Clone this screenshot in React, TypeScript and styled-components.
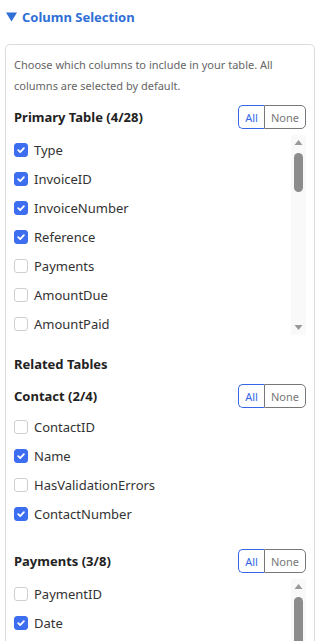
import React from 'react'
import styled, { createGlobalStyle } from 'styled-components'

const GlobalStyle = createGlobalStyle`
  html, body {
    margin: 0;
    padding: 0;
    background: #ffffff;
    font-family: "Noto Sans", "Open Sans", sans-serif;
  }
`

const Page = styled.div`
  padding: 6px 7px 0 5px;
  width: 322px;
  box-sizing: border-box;
  height: 641px;
  overflow: hidden;
`

const Title = styled.div`
  display: flex;
  align-items: center;
  gap: 5px;
  height: 22px;
  margin: 0 0 16px 1px;
  color: #2f6fd6;
  font-size: 13px;
  font-weight: 700;
`

const Panel = styled.div`
  border: 1px solid #dcdcdc;
  border-radius: 5px;
  padding: 9px 8px 20px 8px;
`

const Description = styled.p`
  margin: 0 0 9px 0;
  font-size: 11px;
  line-height: 21px;
  color: #666666;
`

const SectionHeader = styled.div<{ $top: number }>`
  display: flex;
  align-items: center;
  justify-content: space-between;
  margin-top: ${(p) => p.$top}px;
  height: 24px;
`

const HeaderTitle = styled.div`
  font-size: 13px;
  font-weight: 700;
  color: #222222;
`

const Heading = styled.div`
  font-size: 13px;
  font-weight: 700;
  color: #222222;
  margin-top: 19px;
  line-height: 20px;
`

const ButtonGroup = styled.div`
  display: flex;
  height: 24px;
`

const GroupButton = styled.button<{ $active?: boolean }>`
  font-family: inherit;
  font-size: 11px;
  background: #ffffff;
  padding: 0 6px;
  cursor: pointer;
  color: ${(p) => (p.$active ? '#3566e8' : '#777777')};
  border: 1px solid ${(p) => (p.$active ? '#3566e8' : '#777777')};
  border-radius: ${(p) => (p.$active ? '5px 0 0 5px' : '0 5px 5px 0')};
  ${(p) => (p.$active ? 'border-right: none;' : '')}
`

const ScrollBox = styled.div`
  display: flex;
  height: 200px;
  margin-top: 6px;
`

const List = styled.div<{ $scroll?: boolean }>`
  flex: 1;
  margin-top: ${(p) => (p.$scroll ? '0' : '4px')};
  overflow: hidden;
`

const Track = styled.div`
  width: 15px;
  flex-shrink: 0;
  display: flex;
  flex-direction: column;
  align-items: center;
  background: #f9f9f9;
`

const ArrowButton = styled.div`
  height: 15px;
  width: 15px;
  display: flex;
  align-items: center;
  justify-content: center;
`

const Thumb = styled.div<{ $size: number }>`
  width: 9px;
  height: ${(p) => p.$size}px;
  margin-top: 3px;
  border-radius: 5px;
  background: #8c8c8c;
`

const Spacer = styled.div`
  flex: 1;
`

const Item = styled.label`
  display: flex;
  align-items: center;
  gap: 6px;
  height: 29px;
  font-size: 13px;
  color: #333333;
`

const Box = styled.span<{ $checked: boolean }>`
  display: inline-flex;
  align-items: center;
  justify-content: center;
  width: 14px;
  height: 14px;
  box-sizing: border-box;
  border-radius: 3px;
  background: ${(p) => (p.$checked ? '#3d6ef0' : '#ffffff')};
  border: 1px solid ${(p) => (p.$checked ? '#3d6ef0' : '#cfcfcf')};
  flex-shrink: 0;
`

type Col = { name: string; on: boolean }

const primary: Col[] = [
  { name: 'Type', on: true },
  { name: 'InvoiceID', on: true },
  { name: 'InvoiceNumber', on: true },
  { name: 'Reference', on: true },
  { name: 'Payments', on: false },
  { name: 'AmountDue', on: false },
  { name: 'AmountPaid', on: false },
]

const contact: Col[] = [
  { name: 'ContactID', on: false },
  { name: 'Name', on: true },
  { name: 'HasValidationErrors', on: false },
  { name: 'ContactNumber', on: true },
]

const payments: Col[] = [
  { name: 'PaymentID', on: false },
  { name: 'Date', on: true },
]

const Caret = () => (
  <svg width="11" height="10" viewBox="0 0 11 10">
    <path d="M0 0.5 L11 0.5 L5.5 9.5 Z" fill="#2f6fd6" />
  </svg>
)

const Check = () => (
  <svg width="10" height="10" viewBox="0 0 10 10">
    <path d="M2.2 5.2 L4.2 7.1 L7.9 3.1" fill="none" stroke="#ffffff" strokeWidth="1.8" strokeLinecap="round" strokeLinejoin="round" />
  </svg>
)

const Arrow = (props: { up?: boolean }) => (
  <svg width="9" height="7" viewBox="0 0 9 7">
    <path d={props.up ? 'M0.5 6 L4.5 1 L8.5 6 Z' : 'M0.5 1 L8.5 1 L4.5 6 Z'} fill="#999999" />
  </svg>
)

const Scrollbar = (props: { thumb: number }) => (
  <Track>
    <ArrowButton>
      <Arrow up />
    </ArrowButton>
    <Thumb $size={props.thumb} />
    <Spacer />
    <ArrowButton>
      <Arrow />
    </ArrowButton>
  </Track>
)

const Columns = (props: { cols: Col[]; thumb?: number }) => {
  const list = (
    <List $scroll={!!props.thumb}>
      {props.cols.map((c, i) => (
        <Item key={i}>
          <Box $checked={c.on}>{c.on && <Check />}</Box>
          {c.name}
        </Item>
      ))}
    </List>
  )
  if (!props.thumb) return list
  return (
    <ScrollBox>
      {list}
      <Scrollbar thumb={props.thumb} />
    </ScrollBox>
  )
}

const Section = (props: { title: string; top: number; cols: Col[]; thumb?: number }) => (
  <>
    <SectionHeader $top={props.top}>
      <HeaderTitle>{props.title}</HeaderTitle>
      <ButtonGroup>
        <GroupButton $active>All</GroupButton>
        <GroupButton>None</GroupButton>
      </ButtonGroup>
    </SectionHeader>
    <Columns cols={props.cols} thumb={props.thumb} />
  </>
)

export default function App() {
  return (
    <Page>
      <GlobalStyle />
      <Title>
        <Caret />
        Column Selection
      </Title>
      <Panel>
        <Description>
          Choose which columns to include in your table. All columns are selected by default.
        </Description>
        <Section title="Primary Table (4/28)" top={0} cols={primary} thumb={39} />
        <Heading>Related Tables</Heading>
        <Section title="Contact (2/4)" top={10} cols={contact} />
        <Section title="Payments (3/8)" top={21} cols={payments} thumb={150} />
      </Panel>
    </Page>
  )
}
